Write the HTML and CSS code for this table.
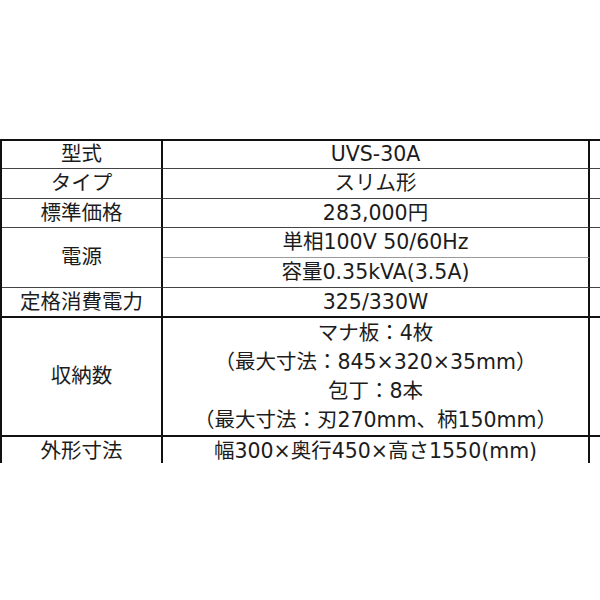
FILE: index.html
```html
<!DOCTYPE html>
<html lang="ja">
<head>
<meta charset="utf-8">
<link rel="stylesheet" href="styles.css">
</head>
<body>
<div class="viewport">
  <div class="spec">
    <div class="c lab">型式</div>
    <div class="c val">UVS-30A</div>
    <div class="c ext"></div>

    <div class="c lab">タイプ</div>
    <div class="c val">スリム形</div>
    <div class="c ext"></div>

    <div class="c lab">標準価格</div>
    <div class="c val">283,000円</div>
    <div class="c ext"></div>

    <div class="c lab span2">電源</div>
    <div class="c val sub">単相100V 50/60Hz</div>
    <div class="c ext span2"></div>
    <div class="c val">容量0.35kVA(3.5A)</div>

    <div class="c lab thick">定格消費電力</div>
    <div class="c val thick">325/330W</div>
    <div class="c ext thick"></div>

    <div class="c lab thick">収納数</div>
    <div class="c val thick multi">
      <span>マナ板：4枚</span>
      <span>（最大寸法：845×320×35mm）</span>
      <span>包丁：8本</span>
      <span>（最大寸法：刃270mm、柄150mm）</span>
    </div>
    <div class="c ext thick"></div>

    <div class="c lab">外形寸法</div>
    <div class="c val">幅300×奥行450×高さ1550(mm)</div>
    <div class="c ext"></div>
  </div>
</div>
</body>
</html>
```

FILE: styles.css
```css
html, body {
  margin: 0;
  padding: 0;
  background: #ffffff;
}

.viewport {
  width: 600px;
  height: 463px;
  overflow: hidden;
  padding-top: 139px;
  box-sizing: border-box;
}

.spec {
  display: grid;
  grid-template-columns: 161px 427px 80px;
  grid-template-rows: 28px 30px 29px 30px 30px 30px 119px 30px;
  width: 668px;
  border-top: 2px solid #111;
  border-left: 2px solid #111;
  font-family: "DejaVu Sans", "Noto Sans CJK JP", sans-serif;
  font-size: 20.5px;
  color: #1c1c1c;
}

.c {
  display: flex;
  align-items: center;
  justify-content: center;
  border-right: 2px solid #111;
  border-bottom: 1px solid #444;
  white-space: nowrap;
  line-height: 1;
}

.span2 {
  grid-row: span 2;
}

.sub {
  border-bottom-color: #9a9a9a;
}

.thick {
  border-bottom: 2px solid #111;
}

.multi {
  flex-direction: column;
  justify-content: center;
}

.multi span {
  display: block;
  line-height: 29px;
}
```
